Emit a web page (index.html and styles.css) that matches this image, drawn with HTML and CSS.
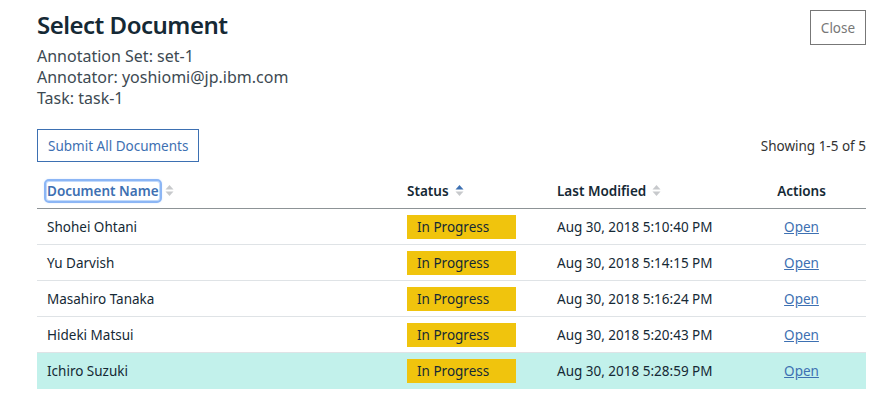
FILE: index.html
```html
<!DOCTYPE html>
<html>
<head>
<meta charset="utf-8">
<link rel="stylesheet" href="styles.css">
</head>
<body>
<div class="page">
  <div class="top">
    <div class="info">
      <h1 class="title">Select Document</h1>
      <div class="meta">Annotation Set: set-1</div>
      <div class="meta">Annotator: yoshiomi@jp.ibm.com</div>
      <div class="meta">Task: task-1</div>
    </div>
    <button class="close-btn">Close</button>
  </div>
  <div class="toolbar">
    <button class="submit-btn">Submit All Documents</button>
    <span class="showing">Showing 1-5 of 5</span>
  </div>
  <table class="docs">
    <colgroup>
      <col class="c-name"><col class="c-status"><col class="c-mod"><col class="c-act">
    </colgroup>
    <thead>
      <tr>
        <th><span class="sortable"><span class="focus">Document Name</span><svg class="sort" width="9" height="13" viewBox="0 0 9 13"><path d="M4.5 1 L8.5 5.5 H0.5 Z" fill="#c7c9cc"/><path d="M4.5 12 L8.5 7.5 H0.5 Z" fill="#c7c9cc"/></svg></span></th>
        <th><span class="sortable">Status<svg class="sort" width="9" height="13" viewBox="0 0 9 13"><path d="M4.5 1 L8.5 5.5 H0.5 Z" fill="#3d70b2"/><path d="M4.5 12 L8.5 7.5 H0.5 Z" fill="#c7c9cc"/></svg></span></th>
        <th><span class="sortable">Last Modified<svg class="sort" width="9" height="13" viewBox="0 0 9 13"><path d="M4.5 1 L8.5 5.5 H0.5 Z" fill="#c7c9cc"/><path d="M4.5 12 L8.5 7.5 H0.5 Z" fill="#c7c9cc"/></svg></span></th>
        <th class="center">Actions</th>
      </tr>
    </thead>
    <tbody>
      <tr><td>Shohei Ohtani</td><td><span class="badge">In Progress</span></td><td>Aug 30, 2018 5:10:40 PM</td><td class="center"><a href="#">Open</a></td></tr>
      <tr><td>Yu Darvish</td><td><span class="badge">In Progress</span></td><td>Aug 30, 2018 5:14:15 PM</td><td class="center"><a href="#">Open</a></td></tr>
      <tr><td>Masahiro Tanaka</td><td><span class="badge">In Progress</span></td><td>Aug 30, 2018 5:16:24 PM</td><td class="center"><a href="#">Open</a></td></tr>
      <tr><td>Hideki Matsui</td><td><span class="badge">In Progress</span></td><td>Aug 30, 2018 5:20:43 PM</td><td class="center"><a href="#">Open</a></td></tr>
      <tr class="selected"><td>Ichiro Suzuki</td><td><span class="badge">In Progress</span></td><td>Aug 30, 2018 5:28:59 PM</td><td class="center"><a href="#">Open</a></td></tr>
    </tbody>
  </table>
</div>
</body>
</html>
```

FILE: styles.css
```css
* { box-sizing: border-box; }
html, body { margin: 0; padding: 0; background: #fff; }
body {
  font-family: "Noto Sans", "Open Sans", sans-serif;
  color: #152935;
}
.page {
  padding: 8px 24px 0 37px;
}
.top {
  display: flex;
  justify-content: space-between;
  align-items: flex-start;
}
.title {
  margin: 0 0 4px 0;
  font-size: 24px;
  line-height: 34px;
  font-weight: 600;
  letter-spacing: -0.5px;
  color: #152935;
}
.meta {
  font-size: 16px;
  line-height: 21px;
  color: #3d4a52;
}
.close-btn {
  margin-top: 2px;
  width: 56px;
  height: 35px;
  border: 1px solid #777;
  background: #fff;
  color: #777;
  font-family: inherit;
  font-size: 13.5px;
  padding: 0;
}
.toolbar {
  margin-top: 20px;
  display: flex;
  justify-content: space-between;
  align-items: center;
}
.submit-btn {
  height: 33px;
  padding: 0 10px;
  border: 1px solid #3d70b2;
  background: #fff;
  color: #3d70b2;
  font-family: inherit;
  font-size: 13.5px;
}
.showing {
  font-size: 13.5px;
  color: #333;
}
.docs {
  margin-top: 12px;
  width: 829px;
  border-collapse: collapse;
  font-size: 13.5px;
}
.c-name { width: 360px; }
.c-status { width: 150px; }
.c-mod { width: 190px; }
.c-act { width: 129px; }
.docs th {
  text-align: left;
  font-weight: 600;
  height: 34px;
  padding: 0 10px;
  border-bottom: 1px solid #8d9396;
  color: #152935;
}
.docs td {
  height: 36px;
  padding: 2px 10px 0 10px;
  border-bottom: 1px solid #dfe3e6;
  color: #152935;
}
.docs .center { text-align: center; }
.sortable {
  display: inline-flex;
  align-items: center;
  gap: 6px;
}
.focus {
  color: #3d70b2;
  outline: 2px solid #8cb6f5;
  outline-offset: 1px;
  border-radius: 2px;
  box-shadow: 0 0 3px 2px #b9d4fb;
}
.badge {
  display: inline-block;
  width: 109px;
  height: 24px;
  line-height: 24px;
  padding-left: 10px;
  background: #f0c40d;
  color: #152935;
}
.docs a {
  color: #3d70b2;
  text-decoration: underline;
}
.selected td { background: #c2f1eb; border-bottom-color: #c2f1eb; }
```
